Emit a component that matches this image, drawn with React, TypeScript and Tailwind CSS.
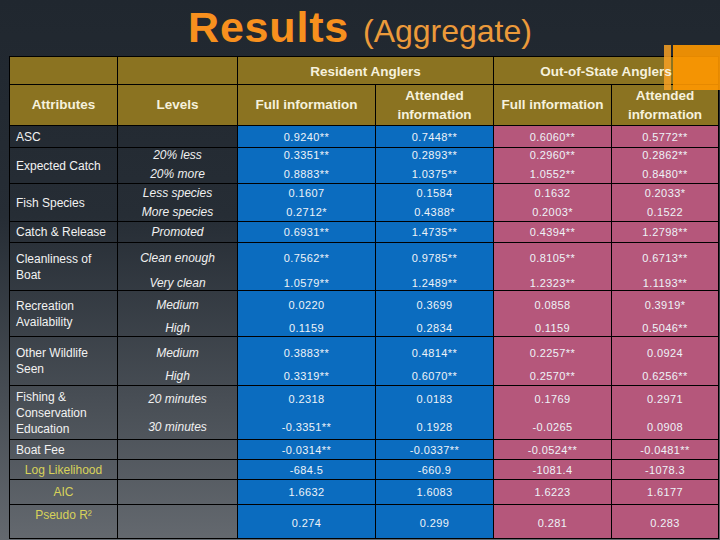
import clsx from "clsx";

// Aggregate results slide: title plus a coefficient table for resident vs
// out-of-state anglers. Data columns are tinted blue (resident) / rose (out-of-state).

type Row = {
  attr: React.ReactNode;
  label?: boolean; // model-fit rows use yellow, centered labels
  levels: string[];
  values: string[][];
  h: string;
  stack: string;
  attrClass?: string;
};

const rows: Row[] = [
  {
    attr: "ASC",
    levels: [],
    values: [["0.9240**"], ["0.7448**"], ["0.6060**"], ["0.5772**"]],
    h: "h-[22px]",
    stack: "",
  },
  {
    attr: "Expected Catch",
    levels: ["20% less", "20% more"],
    values: [
      ["0.3351**", "0.8883**"],
      ["0.2893**", "1.0375**"],
      ["0.2960**", "1.0552**"],
      ["0.2862**", "0.8480**"],
    ],
    h: "h-[34px]",
    stack: "gap-[5px] pb-[2px]",
  },
  {
    attr: "Fish Species",
    levels: ["Less species", "More species"],
    values: [
      ["0.1607", "0.2712*"],
      ["0.1584", "0.4388*"],
      ["0.1632", "0.2003*"],
      ["0.2033*", "0.1522"],
    ],
    h: "h-[38px]",
    stack: "gap-[5px]",
  },
  {
    attr: "Catch & Release",
    levels: ["Promoted"],
    values: [["0.6931**"], ["1.4735**"], ["0.4394**"], ["1.2798**"]],
    h: "h-[21px]",
    stack: "",
  },
  {
    attr: (
      <>
        Cleanliness of
        <br />
        Boat
      </>
    ),
    levels: ["Clean enough", "Very clean"],
    values: [
      ["0.7562**", "1.0579**"],
      ["0.9785**", "1.2489**"],
      ["0.8105**", "1.2323**"],
      ["0.6713**", "1.1193**"],
    ],
    h: "h-[48px]",
    stack: "gap-[11px] pt-[7px]",
  },
  {
    attr: (
      <>
        Recreation
        <br />
        Availability
      </>
    ),
    levels: ["Medium", "High"],
    values: [
      ["0.0220", "0.1159"],
      ["0.3699", "0.2834"],
      ["0.0858", "0.1159"],
      ["0.3919*", "0.5046**"],
    ],
    h: "h-[46px]",
    stack: "gap-[9px] pt-[6px]",
  },
  {
    attr: (
      <>
        Other Wildlife
        <br />
        Seen
      </>
    ),
    levels: ["Medium", "High"],
    values: [
      ["0.3883**", "0.3319**"],
      ["0.4814**", "0.6070**"],
      ["0.2257**", "0.2570**"],
      ["0.0924", "0.6256**"],
    ],
    h: "h-[49px]",
    stack: "gap-[9px] pt-[6px]",
  },
  {
    attr: (
      <>
        Fishing &amp;
        <br />
        Conservation
        <br />
        Education
      </>
    ),
    levels: ["20 minutes", "30 minutes"],
    values: [
      ["0.2318", "-0.3351**"],
      ["0.0183", "0.1928"],
      ["0.1769", "-0.0265"],
      ["0.2971", "0.0908"],
    ],
    h: "h-[54px]",
    stack: "gap-[14px] pt-[1px]",
  },
  {
    attr: "Boat Fee",
    levels: [],
    values: [["-0.0314**"], ["-0.0337**"], ["-0.0524**"], ["-0.0481**"]],
    h: "h-[20px]",
    stack: "",
  },
  {
    attr: "Log Likelihood",
    label: true,
    levels: [],
    values: [["-684.5"], ["-660.9"], ["-1081.4"], ["-1078.3"]],
    h: "h-[20px]",
    stack: "",
  },
  {
    attr: "AIC",
    label: true,
    levels: [],
    values: [["1.6632"], ["1.6083"], ["1.6223"], ["1.6177"]],
    h: "h-[25px]",
    stack: "",
  },
  {
    attr: "Pseudo R²",
    label: true,
    levels: [],
    values: [["0.274"], ["0.299"], ["0.281"], ["0.283"]],
    h: "h-[34px]",
    stack: "pt-[3px]",
    attrClass: "align-top pt-[2px]",
  },
];

const dataBg = ["bg-[#0b6cbf]", "bg-[#0b6cbf]", "bg-[#b5577b]", "bg-[#b5577b]"];

function Lines({ items, className }: { items: string[]; className: string }) {
  return (
    <div className={clsx("flex flex-col items-center", className)}>
      {items.map((t, i) => (
        <span key={i} className="leading-[14px] whitespace-nowrap">
          {t}
        </span>
      ))}
    </div>
  );
}

const head =
  "border border-black bg-[#8b7321] text-[#f6f1dc] font-bold text-[13.5px] text-center align-middle";

export default function App() {
  return (
    <div className="relative w-[720px] h-[540px] overflow-hidden bg-linear-to-b from-[#20272f] via-[#262d35] via-40% to-[#64696f] font-['Liberation_Sans',Arial,sans-serif]">
      <div className="h-[56px] pt-[6px] flex justify-center items-baseline">
        <span className="text-[43px] leading-none font-bold tracking-[0.8px] text-[#f7901e]">
          Results
        </span>
        <span className="ml-[14px] text-[32px] leading-none text-[#ec9a3a]">(Aggregate)</span>
      </div>

      <table className="ml-[9px] w-[709px] table-fixed border-collapse">
        <colgroup>
          <col className="w-[108px]" />
          <col className="w-[120px]" />
          <col className="w-[138px]" />
          <col className="w-[118px]" />
          <col className="w-[118px]" />
          <col className="w-[107px]" />
        </colgroup>
        <thead>
          <tr className="h-[28px]">
            <th className={head} />
            <th className={head} />
            <th colSpan={2} className={clsx(head, "pt-[3px]")}>
              <span className="relative z-[2]">Resident Anglers</span>
            </th>
            <th colSpan={2} className={clsx(head, "pt-[3px]")}>
              <span className="relative z-[2]">Out-of-State Anglers</span>
            </th>
          </tr>
          <tr className="h-[41px]">
            <th className={head}>Attributes</th>
            <th className={head}>Levels</th>
            <th className={clsx(head, "whitespace-nowrap")}>Full information</th>
            <th className={clsx(head, "leading-[19px]")}>
              Attended
              <br />
              information
            </th>
            <th className={clsx(head, "whitespace-nowrap")}>Full information</th>
            <th className={clsx(head, "leading-[19px]")}>
              Attended
              <br />
              information
            </th>
          </tr>
        </thead>
        <tbody>
          {rows.map((r, ri) => (
            <tr key={ri} className={r.h}>
              <td
                className={clsx(
                  "border border-black p-0 text-[12px] leading-[16px] whitespace-nowrap",
                  r.label ? "text-center text-[#d8d25a]" : "text-left pl-[6px] text-[#f2f2f2]",
                  r.attrClass ?? "align-middle"
                )}
              >
                {r.attr}
              </td>
              <td className="border border-black p-0 align-middle text-[12px] italic text-[#f0f0f0]">
                {r.levels.length > 0 && <Lines items={r.levels} className={r.stack} />}
              </td>
              {r.values.map((v, ci) => (
                <td
                  key={ci}
                  className={clsx(
                    "border border-black p-0 align-middle text-[11px] tracking-[0.4px] text-[#eef3f8]",
                    dataBg[ci]
                  )}
                >
                  <Lines items={v} className={r.stack} />
                </td>
              ))}
            </tr>
          ))}
        </tbody>
      </table>

      {/* orange corner accent */}
      <div className="absolute z-[1] top-[45px] left-[664px] w-[7px] h-[45px] bg-[#f7a023]/85" />
      <div className="absolute z-[1] top-[45px] left-[673px] w-[47px] h-[45px] bg-[#ff9800]/90" />
    </div>
  );
}
